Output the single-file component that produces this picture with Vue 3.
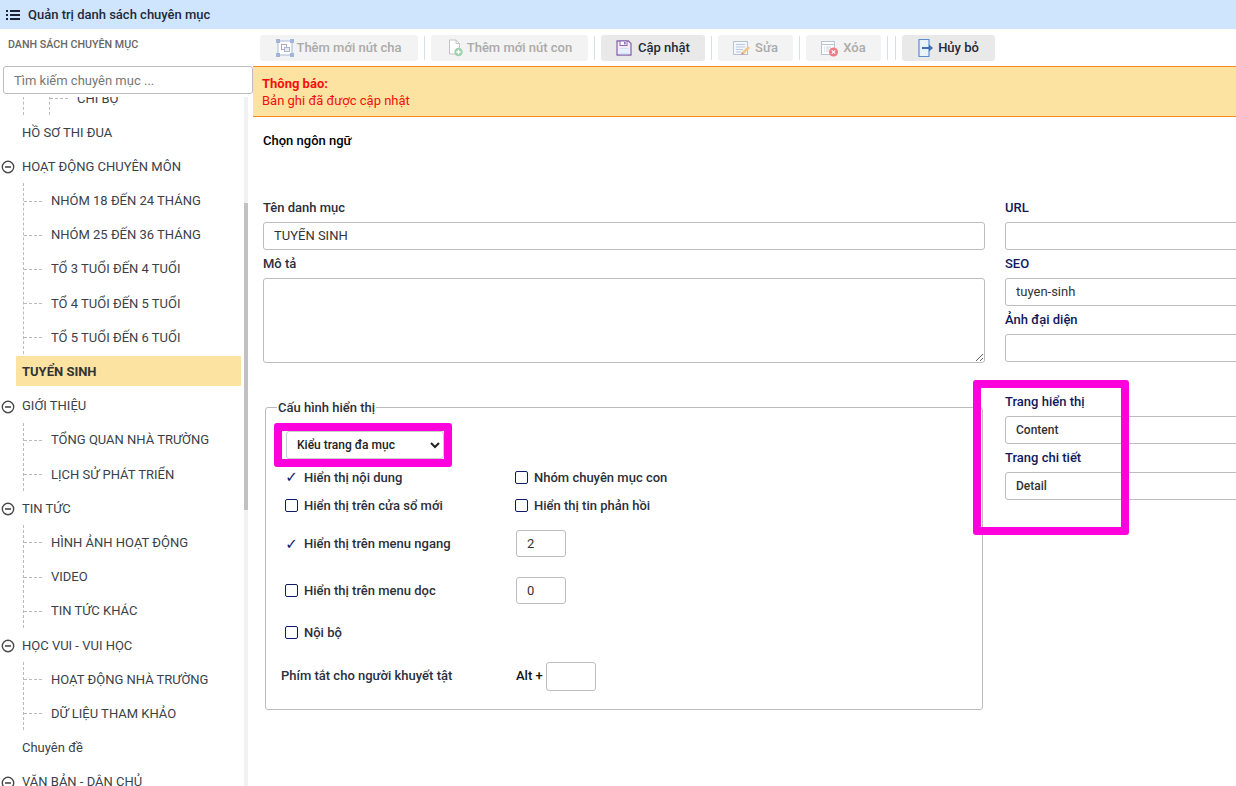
<script setup>
const tree = [
  { label: 'CHI BỘ', nestedOnly: true },
  { label: 'HỒ SƠ THI ĐUA' },
  { label: 'HOẠT ĐỘNG CHUYÊN MÔN', children: ['NHÓM 18 ĐẾN 24 THÁNG', 'NHÓM 25 ĐẾN 36 THÁNG', 'TỔ 3 TUỔI ĐẾN 4 TUỔI', 'TỔ 4 TUỔI ĐẾN 5 TUỔI', 'TỔ 5 TUỔI ĐẾN 6 TUỔI'] },
  { label: 'TUYỂN SINH', active: true },
  { label: 'GIỚI THIỆU', children: ['TỔNG QUAN NHÀ TRƯỜNG', 'LỊCH SỬ PHÁT TRIỂN'] },
  { label: 'TIN TỨC', children: ['HÌNH ẢNH HOẠT ĐỘNG', 'VIDEO', 'TIN TỨC KHÁC'] },
  { label: 'HỌC VUI - VUI HỌC', children: ['HOẠT ĐỘNG NHÀ TRƯỜNG', 'DỮ LIỆU THAM KHẢO'] },
  { label: 'Chuyên đề' },
  { label: 'VĂN BẢN - DÂN CHỦ', children: ['VĂN BẢN'] }
]
</script>

<template>
  <div class="page">
    <header class="topbar">
      <svg class="menu-icon" width="14" height="10" viewBox="0 0 14 10">
        <path d="M0 0h2v2H0zM0 4h2v2H0zM0 8h2v2H0zM4 0h10v2H4zM4 4h10v2H4zM4 8h10v2H4z" fill="#1c2233" />
      </svg>
      <span>Quản trị danh sách chuyên mục</span>
    </header>

    <div class="body">
      <aside class="side">
        <div class="side-title">DANH SÁCH CHUYÊN MỤC</div>
        <input class="search" placeholder="Tìm kiếm chuyên mục ..." />
        <div class="tree-wrap">
          <ul class="tree">
            <template v-for="n in tree" :key="n.label">
              <li v-if="n.nestedOnly" class="nested-wrap">
                <ul class="sub sub-nested">
                  <li class="row child deep">{{ n.label }}</li>
                </ul>
              </li>
              <li v-else>
                <div class="row" :class="{ active: n.active }">
                  <svg v-if="n.children" class="toggle" width="14" height="14" viewBox="0 0 14 14">
                    <circle cx="7" cy="7" r="5.7" fill="none" stroke="#4a4a4a" stroke-width="1.4" />
                    <path d="M4 7h6" stroke="#4a4a4a" stroke-width="1.6" />
                  </svg>
                  <span>{{ n.label }}</span>
                </div>
                <ul v-if="n.children" class="sub">
                  <li v-for="c in n.children" :key="c" class="row child">{{ c }}</li>
                </ul>
              </li>
            </template>
          </ul>
          <div class="scroll-track"><div class="scroll-thumb"></div></div>
        </div>
      </aside>

      <main class="main">
        <div class="toolbar">
          <button class="btn off w158">
            <svg width="18" height="18" viewBox="0 0 18 18">
              <rect x="2" y="2" width="14" height="14" fill="#fff" stroke="#a9b9d3" />
              <rect x="5.5" y="5.5" width="5" height="5" fill="none" stroke="#b3a6c6" />
              <rect x="8.5" y="8.5" width="5" height="4" fill="#ece8f2" stroke="#a9b9d3" />
              <path d="M0 0h4v4H0zM14 0h4v4h-4zM0 14h4v4H0zM14 14h4v4h-4z" fill="#9fb6dc" />
            </svg>
            Thêm mới nút cha
          </button>
          <i class="sep"></i>
          <button class="btn off w157">
            <svg width="16" height="18" viewBox="0 0 16 18">
              <path d="M2.5 1h6.5l3.5 3.5V15h-10z" fill="#fff" stroke="#c4c4c4" />
              <path d="M9 1v3.5h3.5" fill="none" stroke="#c4c4c4" />
              <circle cx="11.5" cy="13" r="4.2" fill="#9fcfae" />
              <path d="M9.3 13h4.4M11.5 10.8v4.4" stroke="#fff" stroke-width="1.3" />
            </svg>
            Thêm mới nút con
          </button>
          <i class="sep"></i>
          <button class="btn on w104">
            <svg width="16" height="16" viewBox="0 0 16 16">
              <path d="M1 1h11.5L15 3.5V15H1z" fill="#f2ecf8" stroke="#8a6bb0" stroke-width="1.3" />
              <rect x="4" y="1" width="7" height="4.5" fill="#fff" stroke="#8a6bb0" />
              <rect x="8" y="2" width="1.6" height="2.4" fill="#8a6bb0" />
              <rect x="3.5" y="8" width="9" height="6.4" fill="#cfe2f7" />
              <path d="M3.5 10h9M3.5 12h9" stroke="#fff" />
            </svg>
            Cập nhật
          </button>
          <i class="sep"></i>
          <button class="btn off w75">
            <svg width="18" height="17" viewBox="0 0 18 17">
              <rect x="0.5" y="1.5" width="14" height="13" fill="#f4f6fa" stroke="#b8c2d1" />
              <path d="M3 4.500h9M3 7h9M3 9.500h7M3 12h5" stroke="#b9cbe4" />
              <path d="M8 15l1-3 6-6 2 2-6 6z" fill="#efc98a" />
              <path d="M8 15l1-3 2 2z" fill="#d98c8c" />
            </svg>
            Sửa
          </button>
          <i class="sep"></i>
          <button class="btn off w75">
            <svg width="18" height="17" viewBox="0 0 18 17">
              <rect x="0.5" y="1.5" width="13" height="13" fill="#fff" stroke="#b8c2d1" />
              <path d="M1 4.500h12" stroke="#b8c2d1" />
              <path d="M3 7h1M3 9h1M3 11h1M5 7h5M5 9h3M5 11h3" stroke="#c6d2e2" />
              <circle cx="12.500" cy="12" r="4.500" fill="#ec7d86" />
              <path d="M10.800 10.300l3.400 3.400M14.200 10.300l-3.400 3.400" stroke="#fff" stroke-width="1.200" />
            </svg>
            Xóa
          </button>
          <i class="sep"></i>
          <i class="sep sep-tight"></i>
          <button class="btn on w93">
            <svg width="16" height="18" viewBox="0 0 16 18">
              <path d="M1 .5h10v17H1z" fill="#eaf2fb" stroke="#5e8fcf" stroke-width="1.200" />
              <path d="M4 9h8" stroke="#3f6fb0" stroke-width="2" />
              <path d="M11 5.500L15 9l-4 3.500z" fill="#3f6fb0" />
            </svg>
            Hủy bỏ
          </button>
        </div>

        <div class="notice">
          <strong>Thông báo:</strong>
          <span>Bản ghi đã được cập nhật</span>
        </div>

        <div class="lang">Chọn ngôn ngữ</div>

        <div class="form">
          <div class="col-left">
            <label class="lbl first">Tên danh mục</label>
            <input class="field" value="TUYỂN SINH" />
            <label class="lbl">Mô tả</label>
            <textarea class="area"></textarea>

            <fieldset class="config">
              <legend>Cấu hình hiển thị</legend>
              <select class="kind">
                <option>Kiểu trang đa mục</option>
              </select>
              <div class="opt-row r1">
                <div class="opt"><span class="tick">✓</span>Hiển thị nội dung</div>
                <div class="opt second"><span class="box"></span>Nhóm chuyên mục con</div>
              </div>
              <div class="opt-row r2">
                <div class="opt"><span class="box"></span>Hiển thị trên cửa sổ mới</div>
                <div class="opt second"><span class="box"></span>Hiển thị tin phản hồi</div>
              </div>
              <div class="opt-row r3">
                <div class="opt"><span class="tick">✓</span>Hiển thị trên menu ngang</div>
                <input class="num" value="2" />
              </div>
              <div class="opt-row r4">
                <div class="opt"><span class="box"></span>Hiển thị trên menu dọc</div>
                <input class="num" value="0" />
              </div>
              <div class="opt-row r5">
                <div class="opt"><span class="box"></span>Nội bộ</div>
              </div>
              <div class="opt-row r6">
                <div class="shortcut">Phím tắt cho người khuyết tật</div>
                <div class="alt"><span>Alt +</span><input class="num" /></div>
              </div>
            </fieldset>
          </div>

          <div class="col-right">
            <label class="lbl first">URL</label>
            <input class="field" />
            <label class="lbl">SEO</label>
            <input class="field" value="tuyen-sinh" />
            <label class="lbl">Ảnh đại diện</label>
            <input class="field" />
            <label class="lbl page-lbl">Trang hiển thị</label>
            <input class="field strong" value="Content" />
            <label class="lbl">Trang chi tiết</label>
            <input class="field strong" value="Detail" />
          </div>
        </div>

        <div class="mark mark-a"></div>
        <div class="mark mark-b"></div>
      </main>
    </div>
  </div>
</template>

<style scoped>
.page {
  width: 1236px;
  height: 786px;
  overflow: hidden;
  font-family: Roboto, "Noto Sans", sans-serif;
  color: #333;
  background: #fff;
}
.topbar {
  height: 29px;
  background: #cfe5fd;
  display: flex;
  align-items: center;
  padding-left: 6px;
  gap: 8px;
  font-size: 13px;
  font-weight: 500;
  color: #1f2a3a;
}
.menu-icon { flex: none; }
.body { display: flex; height: 757px; }
.side { width: 253px; flex: none; }
.side-title {
  font-size: 10.7px;
  font-weight: 500;
  color: #666;
  padding: 10px 0 0 8px;
  height: 37px;
  box-sizing: border-box;
  line-height: 12px;
}
.search {
  display: block;
  box-sizing: border-box;
  width: 250px;
  height: 28px;
  margin-left: 3px;
  border: 1px solid #bdbdbd;
  border-radius: 3px;
  padding: 0 10px;
  font: 400 13px Roboto, sans-serif;
  color: #555;
  outline: none;
}
.search::placeholder { color: #777; opacity: 1; }
.tree-wrap {
  position: relative;
  height: 692px;
  margin-top: 3px;
  overflow: hidden;
}
.tree { list-style: none; margin: -16.1px 0 0; padding: 0; }
.sub { list-style: none; margin: 0 0 0 23px; padding: 0; border-left: 1px dashed #bbb; }
.row {
  height: 34.2px;
  display: flex;
  align-items: center;
  padding-left: 22px;
  font-size: 13px;
  color: #3a3f4a;
  position: relative;
  box-sizing: border-box;
  white-space: nowrap;
}
.toggle { position: absolute; left: 1px; top: 11px; }
.row.active {
  font-weight: 700;
  color: #333;
  background: #fde3a1;
  width: 225px;
  margin: 2px 0 2.2px 16px;
  height: 30px;
  padding-left: 6px;
}
.child { padding-left: 27px; }
.child::before {
  content: "";
  position: absolute;
  left: 0;
  top: 50%;
  width: 18px;
  border-top: 1px dashed #bbb;
}
.sub-nested { position: relative; }
.sub-nested .deep { margin-left: 25px; border-left: 1px dashed #bbb; padding-left: 27px; }
.scroll-track {
  position: absolute;
  left: 244px;
  top: 0;
  bottom: 0;
  width: 4px;
  background: #f1f1f1;
}
.scroll-thumb {
  margin-top: 106px;
  height: 307px;
  background: #c1c1c1;
}
.main {
  position: relative;
  flex: 1;
  min-width: 0;
  overflow: hidden;
}
.toolbar {
  display: flex;
  align-items: center;
  height: 26px;
  margin-top: 6px;
  padding-left: 7px;
}
.btn {
  height: 26px;
  border: 0;
  border-radius: 3px;
  display: flex;
  align-items: center;
  justify-content: center;
  gap: 4px;
  padding: 0 0 2px;
  font: 500 13px Roboto, sans-serif;
  box-sizing: border-box;
}
.btn svg { margin-top: 2px; }
.btn.off { background: #f3f3f3; color: #aaa; }
.btn.on { background: #e9e9e9; color: #232b3a; }
.w158 { width: 158px; gap: 2px; }
.w157 { width: 157px; }
.w104 { width: 104px; gap: 6px; }
.w75 { width: 75px; }
.w93 { width: 93px; gap: 4px; }
.sep {
  width: 1px;
  height: 24px;
  background: #d8dee4;
  margin: 0 6px;
}
.sep-tight { margin-left: 1px; }
.notice {
  box-sizing: border-box;
  height: 51px;
  margin-top: 5px;
  background: #fde3a1;
  border: 1px solid #f78a1d;
  border-width: 1px 0;
  padding: 8px 9px;
  color: #f40f0f;
  font-size: 13px;
  line-height: 17px;
  display: flex;
  flex-direction: column;
}
.notice strong { font-weight: 700; }
.lang {
  margin: 16px 0 0 10px;
  font-size: 13px;
  font-weight: 500;
  color: #000;
  line-height: 15px;
}
.form {
  display: grid;
  grid-template-columns: 722px 400px;
  column-gap: 20px;
  padding-left: 10px;
  margin-top: 52px;
}
.col-left, .col-right { display: flex; flex-direction: column; }
.lbl {
  display: block;
  font-size: 13px;
  font-weight: 500;
  line-height: 15px;
  height: 15px;
  margin: 6px 0 7px;
}
.col-left .lbl { color: #2b2f3a; }
.lbl.first { margin-top: 0; }
.field {
  box-sizing: border-box;
  height: 28px;
  width: 100%;
  border: 1px solid #bdbdbd;
  border-radius: 3px;
  padding: 0 10px 2px;
  font: 400 13px Roboto, sans-serif;
  color: #333;
  outline: none;
}
.field.strong { font: 500 12px Roboto, sans-serif; padding-bottom: 0; }
.col-right .lbl { color: #10185a; }
.col-right .page-lbl { margin-top: 32px; }
.area {
  box-sizing: border-box;
  display: block;
  width: 100%;
  height: 85px;
  border: 1px solid #bdbdbd;
  border-radius: 3px;
  padding: 6px 10px;
  outline: none;
}
.config {
  box-sizing: border-box;
  width: 718px;
  height: 310px;
  margin: 37px 0 0 2px;
  padding: 0 0 0 19px;
  border: 1px solid #bbb;
  border-radius: 3px;
  position: relative;
}
.config legend {
  margin-left: -8px;
  padding: 0 1px;
  font-size: 13px;
  font-weight: 500;
  line-height: 15px;
  color: #2b2f3a;
}
.kind {
  display: block;
  box-sizing: border-box;
  width: 158px;
  height: 28px;
  margin: 16px 0 0 1px;
  border: 1px solid #ccc;
  border-radius: 3px;
  padding-left: 6px;
  background: #fff;
  font: 500 12px Roboto, sans-serif;
  color: #222;
  outline: none;
}
.opt-row {
  display: grid;
  grid-template-columns: 231px auto;
  align-items: center;
  height: 28px;
  font-size: 13px;
  font-weight: 500;
  color: #2b2f3a;
}
.r1 { margin-top: 4px; }
.r3 { margin-top: 11px; height: 27px; }
.r4 { margin-top: 20px; height: 27px; }
.r5 { margin-top: 17px; height: 22px; }
.r6 { margin-top: 19px; height: 29px; margin-left: -4px; grid-template-columns: 235px auto; }
.shortcut { padding-bottom: 2px; }
.opt { display: flex; align-items: center; gap: 6px; }
.second { margin-left: -1px; }
.box {
  box-sizing: border-box;
  width: 13px;
  height: 13px;
  border: 1.5px solid #0d1a6e;
  border-radius: 2px;
  background: #fff;
  flex: none;
}
.tick {
  width: 13px;
  flex: none;
  text-align: center;
  color: #0d1a6e;
  font: 400 15px "DejaVu Sans", sans-serif;
}
.num {
  box-sizing: border-box;
  width: 50px;
  height: 27px;
  border: 1px solid #bdbdbd;
  border-radius: 3px;
  padding: 0 10px;
  font: 400 13px Roboto, sans-serif;
  color: #333;
  outline: none;
}
.alt { display: flex; align-items: center; gap: 3px; color: #111; }
.alt span { padding-bottom: 2px; }
.alt .num { width: 50px; height: 29px; }
.mark {
  position: absolute;
  box-sizing: border-box;
  border: 8px solid #ff00dc;
  border-radius: 3px;
  pointer-events: none;
}
.mark-a { left: 21px; top: 394px; width: 178px; height: 44px; }
.mark-b { left: 720px; top: 351px; width: 156px; height: 155px; }
</style>

<style>
html, body { margin: 0; overflow: hidden; }
</style>
